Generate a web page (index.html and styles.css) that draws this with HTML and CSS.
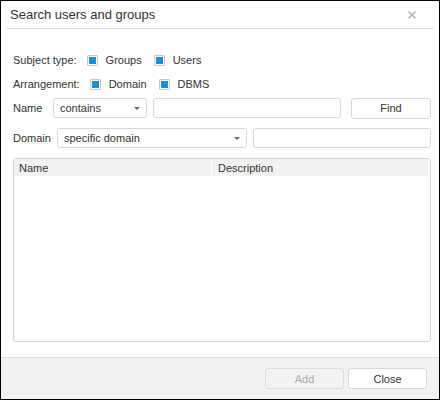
FILE: index.html
```html
<!DOCTYPE html>
<html>
<head>
  <meta charset="utf-8">
  <title>Search users and groups</title>
  <link rel="stylesheet" href="styles.css">
</head>
<body>
  <div class="dialog">
    <div class="dialog-header">
      <h1 class="dialog-title">Search users and groups</h1>
      <button class="close-icon" aria-label="Close">
        <svg viewBox="0 0 8 8" width="8" height="8">
          <path d="M0.5 0.5 7.5 7.5M7.5 0.5 0.5 7.5" stroke="#aaa" stroke-width="1.2" fill="none"/>
        </svg>
      </button>
    </div>

    <div class="dialog-body">
      <div class="option-row row-subject">
        <span class="option-label">Subject type:</span>
        <label class="check"><span class="check-box"></span>Groups</label>
        <label class="check"><span class="check-box"></span>Users</label>
      </div>

      <div class="option-row row-arrangement">
        <span class="option-label">Arrangement:</span>
        <label class="check"><span class="check-box"></span>Domain</label>
        <label class="check"><span class="check-box"></span>DBMS</label>
      </div>

      <div class="field-row row-name">
        <span class="field-label label-name">Name</span>
        <div class="select select-name">
          <span class="select-text">contains</span>
          <span class="select-arrow"></span>
        </div>
        <div class="input"></div>
        <button class="button find-button">Find</button>
      </div>

      <div class="field-row row-domain">
        <span class="field-label label-domain">Domain</span>
        <div class="select select-domain">
          <span class="select-text">specific domain</span>
          <span class="select-arrow"></span>
        </div>
        <div class="input"></div>
      </div>

      <div class="grid">
        <div class="grid-header">
          <div class="grid-col col-name">Name</div>
          <div class="grid-col col-desc">Description</div>
        </div>
      </div>
    </div>

    <div class="dialog-footer">
      <button class="button footer-button" disabled>Add</button>
      <button class="button footer-button">Close</button>
    </div>
  </div>
</body>
</html>
```

FILE: styles.css
```css
:root {
  --text: #333333;
  --text-muted: #aaaaaa;
  --border: #d9d9d9;
  --border-light: #e0e0e0;
  --bg-soft: #f2f2f2;
  --accent: #1f8dd6;
  --radius: 3px;
}

* {
  margin: 0;
  padding: 0;
  box-sizing: border-box;
}

body {
  font-family: "Liberation Sans", Arial, sans-serif;
  font-size: 11px;
  color: var(--text);
  background: #fff;
}

.dialog {
  width: 440px;
  height: 400px;
  border: 1px solid #000;
  display: flex;
  flex-direction: column;
  background: #fff;
}

.dialog-header {
  height: 28px;
  margin: 0 5px;
  border-bottom: 1px solid var(--border-light);
  display: flex;
  align-items: center;
  padding: 0 0 1px 4px;
}

.dialog-title {
  flex: 1;
  font-size: 13px;
  font-weight: 400;
  color: var(--text);
}

.close-icon {
  border: none;
  background: none;
  width: 8px;
  height: 8px;
  display: flex;
  margin-right: 18px;
  margin-top: 1px;
}

.dialog-body {
  flex: 1;
  padding: 23px 8px 0 12px;
  display: flex;
  flex-direction: column;
}

.option-row {
  height: 16px;
  display: flex;
  align-items: center;
}

.row-arrangement {
  margin-top: 8px;
}

.option-label {
  margin-right: 10px;
}

.row-arrangement .option-label {
  margin-right: 10px;
}

.check {
  display: flex;
  align-items: center;
  gap: 8px;
  margin-right: 12px;
}

.check-box {
  width: 11px;
  height: 11px;
  border: 1px solid #c8c8c8;
  border-radius: 1px;
  padding: 1px;
  background: #fff;
}

.check-box::after {
  content: "";
  display: block;
  width: 7px;
  height: 7px;
  background: var(--accent);
}

.field-row {
  height: 20px;
  display: flex;
  align-items: center;
}

.row-name {
  margin-top: 6px;
}

.row-domain {
  margin-top: 10px;
}

.field-label {
  flex-shrink: 0;
}

.label-name {
  width: 40px;
}

.label-domain {
  width: 44px;
}

.select {
  height: 20px;
  border: 1px solid var(--border);
  border-radius: var(--radius);
  display: flex;
  align-items: center;
  padding: 0 6px;
  flex-shrink: 0;
}

.select-name {
  width: 94px;
}

.select-domain {
  width: 190px;
}

.select-text {
  flex: 1;
}

.select-arrow {
  width: 0;
  height: 0;
  border-left: 3.5px solid transparent;
  border-right: 3.5px solid transparent;
  border-top: 3px solid #666;
  margin-right: 0;
}

.input {
  flex: 1;
  height: 20px;
  margin-left: 6px;
  border: 1px solid var(--border);
  border-radius: var(--radius);
}

.button {
  font-family: inherit;
  font-size: 11px;
  color: var(--text);
  background: #fff;
  border: 1px solid var(--border);
  border-radius: var(--radius);
  height: 21px;
}

.find-button {
  width: 80px;
  margin-left: 10px;
}

.grid {
  margin-top: 10px;
  height: 184px;
  border: 1px solid #d4d4d4;
  border-radius: var(--radius);
  overflow: hidden;
}

.grid-header {
  height: 17px;
  margin-right: 2px;
  display: flex;
  background: var(--bg-soft);
}

.grid-col {
  display: flex;
  align-items: center;
}

.col-name {
  width: 198px;
  padding-left: 5px;
  border-right: 1px solid #fff;
}

.col-desc {
  flex: 1;
  padding-left: 6px;
}

.dialog-footer {
  height: 42px;
  border-top: 1px solid var(--border-light);
  background: var(--bg-soft);
  display: flex;
  justify-content: flex-end;
  align-items: flex-start;
  gap: 4px;
  padding: 10px 12px 0 0;
}

.footer-button {
  width: 79px;
}

.footer-button:disabled {
  background: var(--bg-soft);
  color: var(--text-muted);
  border-color: #dcdcdc;
}
```
